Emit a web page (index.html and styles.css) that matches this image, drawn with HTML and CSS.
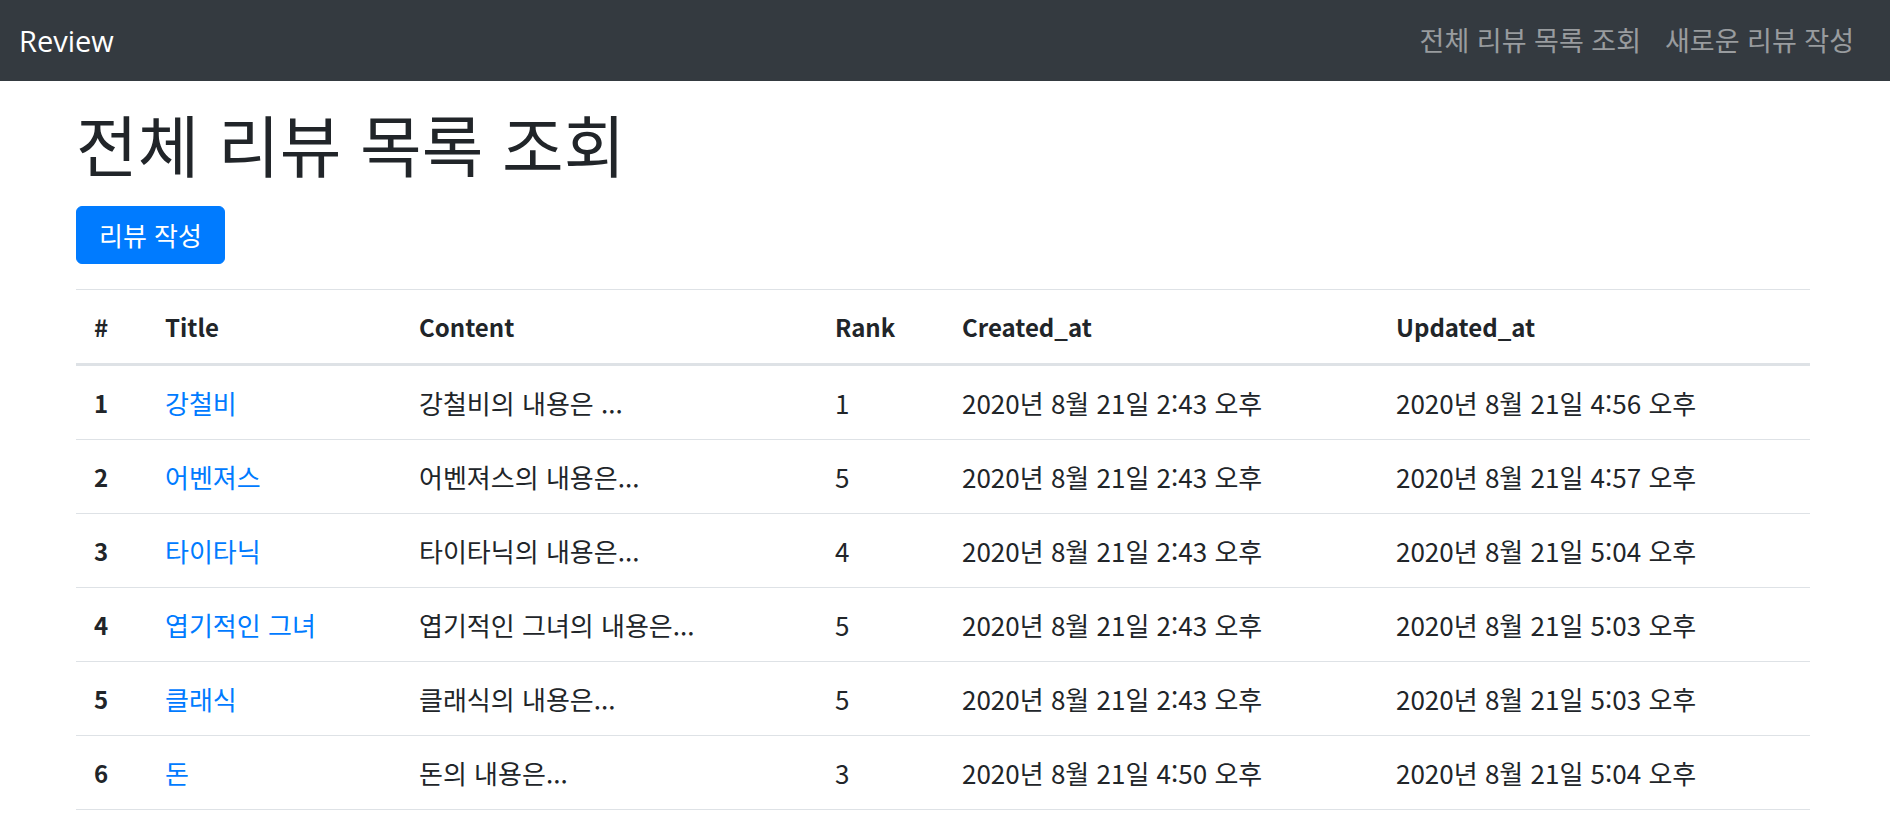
FILE: index.html
```html
<!DOCTYPE html>
<html lang="ko">
<head>
<meta charset="utf-8">
<title>Review</title>
<link rel="stylesheet" href="styles.css">
</head>
<body>
<nav class="navbar">
  <a class="brand" href="#">Review</a>
  <div class="nav-links">
    <a class="nav-link" href="#">전체 리뷰 목록 조회</a>
    <a class="nav-link" href="#">새로운 리뷰 작성</a>
  </div>
</nav>
<main class="container">
  <h1 class="page-title">전체 리뷰 목록 조회</h1>
  <div class="actions"><a class="btn" href="#">리뷰 작성</a></div>
  <table class="table">
    <colgroup>
      <col class="c-num"><col class="c-title"><col class="c-content"><col class="c-rank"><col class="c-created"><col class="c-updated">
    </colgroup>
    <thead>
      <tr><th>#</th><th>Title</th><th>Content</th><th>Rank</th><th>Created_at</th><th>Updated_at</th></tr>
    </thead>
    <tbody>
      <tr><th>1</th><td><a href="#">강철비</a></td><td>강철비의 내용은 ...</td><td>1</td><td>2020년 8월 21일 2:43 오후</td><td>2020년 8월 21일 4:56 오후</td></tr>
      <tr><th>2</th><td><a href="#">어벤져스</a></td><td>어벤져스의 내용은...</td><td>5</td><td>2020년 8월 21일 2:43 오후</td><td>2020년 8월 21일 4:57 오후</td></tr>
      <tr><th>3</th><td><a href="#">타이타닉</a></td><td>타이타닉의 내용은...</td><td>4</td><td>2020년 8월 21일 2:43 오후</td><td>2020년 8월 21일 5:04 오후</td></tr>
      <tr><th>4</th><td><a href="#">엽기적인 그녀</a></td><td>엽기적인 그녀의 내용은...</td><td>5</td><td>2020년 8월 21일 2:43 오후</td><td>2020년 8월 21일 5:03 오후</td></tr>
      <tr><th>5</th><td><a href="#">클래식</a></td><td>클래식의 내용은...</td><td>5</td><td>2020년 8월 21일 2:43 오후</td><td>2020년 8월 21일 5:03 오후</td></tr>
      <tr><th>6</th><td><a href="#">돈</a></td><td>돈의 내용은...</td><td>3</td><td>2020년 8월 21일 4:50 오후</td><td>2020년 8월 21일 5:04 오후</td></tr>
    </tbody>
  </table>
</main>
</body>
</html>
```

FILE: styles.css
```css
* { box-sizing: border-box; }
html, body { margin: 0; padding: 0; }
body {
  font-family: "Noto Sans CJK KR", "Noto Sans", sans-serif;
  font-size: 26px;
  color: #212529;
  background: #fff;
}
a { text-decoration: none; }

.navbar {
  height: 81px;
  background: #343a40;
  display: flex;
  align-items: center;
  justify-content: space-between;
  padding: 0 24px 0 19px;
}
.brand {
  font-family: "Open Sans", "Noto Sans", sans-serif;
  font-size: 29px;
  color: #fff;
  line-height: 1.5;
}
.nav-links { display: flex; }
.nav-link {
  font-size: 27px;
  color: rgba(255,255,255,.5);
  padding: 0 12px;
  line-height: 1.5;
}

.container {
  padding: 0 80px 0 76px;
}
.page-title {
  margin: 0;
  padding-top: 24px;
  font-size: 67px;
  font-weight: 400;
  line-height: 76px;
  color: #212529;
}
.actions { margin-top: 25px; display: flex; }
.btn {
  display: inline-block;
  background: #007bff;
  border: 1px solid #007bff;
  color: #fff;
  font-size: 26px;
  line-height: 36px;
  padding: 10px 22px;
  border-radius: 6px;
}

.table {
  margin-top: 25px;
  width: 100%;
  border-collapse: collapse;
  table-layout: fixed;
}
.c-num { width: 71px; }
.c-title { width: 254px; }
.c-content { width: 416px; }
.c-rank { width: 127px; }
.c-created { width: 434px; }
.c-updated { width: auto; }

.table th, .table td {
  text-align: left;
  vertical-align: middle;
  padding: 18px;
  height: 74px;
  line-height: 37px;
  border-top: 1px solid #dee2e6;
  white-space: nowrap;
}
.table th { font-weight: 700; font-size: 24px; }
.table thead th {
  border-bottom: 3px solid #dee2e6;
}
.table tbody tr:first-child th,
.table tbody tr:first-child td { border-top: 0; }
.table tbody tr:last-child th,
.table tbody tr:last-child td { border-bottom: 1px solid #dee2e6; }
.table td a { color: #007bff; }
```
